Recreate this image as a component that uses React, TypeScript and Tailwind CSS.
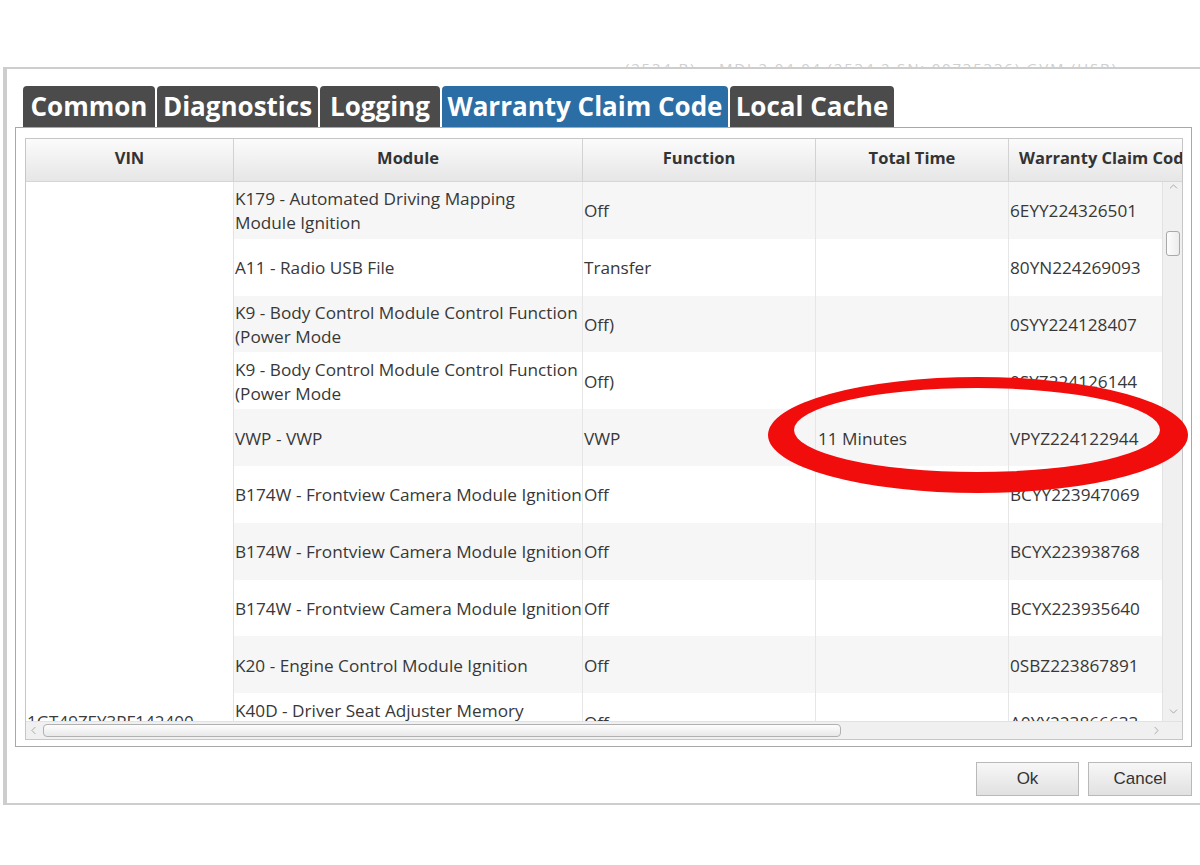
import { ChevronDown, ChevronLeft, ChevronRight, ChevronUp } from 'lucide-react'

const tabs = [
  { label: 'Common', w: 'w-[132px]', active: false },
  { label: 'Diagnostics', w: 'w-[161px]', active: false },
  { label: 'Logging', w: 'w-[120px]', active: false },
  { label: 'Warranty Claim Code', w: 'w-[286px]', active: true },
  { label: 'Local Cache', w: 'w-[164px]', active: false },
]

const rows = [
  { module: ['K179 - Automated Driving Mapping', 'Module Ignition'], fn: 'Off', time: '', code: '6EYY224326501' },
  { module: ['A11 - Radio USB File'], fn: 'Transfer', time: '', code: '80YN224269093' },
  { module: ['K9 - Body Control Module Control Function', '(Power Mode'], fn: 'Off)', time: '', code: '0SYY224128407' },
  { module: ['K9 - Body Control Module Control Function', '(Power Mode'], fn: 'Off)', time: '', code: '0SYZ224126144' },
  { module: ['VWP - VWP'], fn: 'VWP', time: '11 Minutes', code: 'VPYZ224122944' },
  { module: ['B174W - Frontview Camera Module Ignition'], fn: 'Off', time: '', code: 'BCYY223947069' },
  { module: ['B174W - Frontview Camera Module Ignition'], fn: 'Off', time: '', code: 'BCYX223938768' },
  { module: ['B174W - Frontview Camera Module Ignition'], fn: 'Off', time: '', code: 'BCYX223935640' },
  { module: ['K20 - Engine Control Module Ignition'], fn: 'Off', time: '', code: '0SBZ223867891' },
  { module: ['K40D - Driver Seat Adjuster Memory', 'Ignition'], fn: 'Off', time: '', code: 'A0YY223866633' },
]

const headers = [
  { label: 'VIN', w: 'w-[208px]', align: 'justify-center' },
  { label: 'Module', w: 'w-[349px]', align: 'justify-center' },
  { label: 'Function', w: 'w-[233px]', align: 'justify-center' },
  { label: 'Total Time', w: 'w-[193px]', align: 'justify-center' },
  { label: 'Warranty Claim Code', w: 'flex-1', align: 'justify-start pl-[10px]' },
]

export default function App() {
  return (
    <div className="w-[1200px] h-[865px] bg-white relative overflow-hidden font-['Open_Sans','Noto_Sans',sans-serif]">
      {/* faint text of the window behind, cut by the dialog edge */}
      <div className="h-[67px] flex items-end pl-[625px]">
        <div className="h-[6px] overflow-hidden">
          <div className="text-[15px] leading-[15px] text-[#d0d0d0] whitespace-nowrap tracking-[0.12em]">
            (2534 B)&nbsp;&nbsp;&nbsp; MDI 2 04.04 (2534 2 SN: 00735336) GVM (USB)
          </div>
        </div>
      </div>

      {/* dialog */}
      <div className="ml-[3px] w-[1197px] border-l-[4px] border-t-2 border-b-2 border-[#cdcdcd] pt-[17px] pb-[7px]">
        <div className="flex gap-[2px] pl-[16px] h-[41px]">
          {tabs.map(t => (
            <div
              key={t.label}
              className={`${t.w} h-[41px] rounded-t-[4px] flex items-center justify-center text-white text-[26px] font-bold whitespace-nowrap ${t.active ? 'bg-[#2b6da5]' : 'bg-[#4b4b4b]'}`}
            >
              {t.label}
            </div>
          ))}
        </div>

        {/* tab panel */}
        <div className="ml-[8px] w-[1177px] h-[620px] border border-[#a8a8a8] pt-[10px] pl-[9px] pr-[8px] pb-[7px]">
          <div className="w-[1158px] h-[602px] border border-[#c6c6c6] flex flex-col bg-white">
            {/* header */}
            <div className="h-[43px] flex bg-gradient-to-b from-[#fbfbfb] to-[#e6e6e6] border-b border-[#d6d6d6] overflow-hidden">
              {headers.map((h, i) => (
                <div
                  key={h.label}
                  className={`${h.w} shrink-0 h-full flex items-center ${h.align} pb-[3px] text-[16.5px] font-bold text-[#333] whitespace-nowrap overflow-hidden ${i < headers.length - 1 ? 'border-r border-[#d2d2d2]' : ''}`}
                >
                  {h.label}
                </div>
              ))}
            </div>

            {/* body */}
            <div className="h-[539px] flex overflow-hidden">
              <div className="w-[208px] shrink-0 border-r border-[#e2e2e2] flex flex-col">
                <div className="h-[511px] shrink-0" />
                <div className="h-[57px] shrink-0 flex items-center pl-[1px] text-[17px] text-[#3b3b3b] whitespace-nowrap">
                  1GT49ZEY3PF142400
                </div>
              </div>

              <div className="w-[928px] shrink-0 flex flex-col">
                {rows.map((r, i) => (
                  <div
                    key={i}
                    className={`h-[56.8px] shrink-0 flex text-[17.2px] leading-[24px] text-[#383838] ${i % 2 === 0 ? 'bg-[#f6f6f6]' : 'bg-white'}`}
                  >
                    <div className="w-[349px] shrink-0 flex flex-col justify-center pl-[1px] pt-[2px] border-r border-[#e6e6e6] whitespace-nowrap overflow-hidden">
                      {r.module.map(m => (
                        <span key={m}>{m}</span>
                      ))}
                    </div>
                    <div className="w-[233px] shrink-0 flex items-center pl-[1px] pt-[2px] border-r border-[#e6e6e6]">{r.fn}</div>
                    <div className="w-[193px] shrink-0 flex items-center pl-[2px] pt-[2px] border-r border-[#e6e6e6]">{r.time}</div>
                    <div className="flex-1 flex items-center pl-[1px] pt-[2px] whitespace-nowrap overflow-hidden">{r.code}</div>
                  </div>
                ))}
              </div>

              {/* vertical scrollbar */}
              <div className="w-[21px] shrink-0 bg-[#f0f0f0] border-l border-[#e2e2e2] flex flex-col items-center">
                <ChevronUp size={13} strokeWidth={1.5} className="text-[#9a9a9a] mt-[-2px]" />
                <div className="mt-[38px] w-[14px] h-[25px] rounded-[3px] border border-[#a9a9a9] bg-gradient-to-r from-[#fdfdfd] to-[#ececec]" />
                <div className="flex-1" />
                <ChevronDown size={13} strokeWidth={1.5} className="text-[#9a9a9a] mb-[3px]" />
              </div>
            </div>

            {/* horizontal scrollbar */}
            <div className="h-[18px] flex bg-[#f0f0f0] border-t border-[#e2e2e2]">
              <div className="w-[1137px] flex items-center">
                <ChevronLeft size={13} strokeWidth={1.5} className="text-[#9a9a9a] ml-[1px]" />
                <div className="ml-[3px] w-[798px] h-[13px] rounded-[4px] border border-[#b1b1b1] bg-gradient-to-b from-[#fdfdfd] to-[#e9e9e9]" />
                <div className="flex-1" />
                <ChevronRight size={13} strokeWidth={1.5} className="text-[#9a9a9a]" />
              </div>
              <div className="flex-1" />
            </div>
          </div>
        </div>

        {/* buttons */}
        <div className="flex justify-end gap-[9px] pr-[8px] mt-[15px]">
          <button className="w-[103px] h-[34px] border border-[#b9b9b9] bg-gradient-to-b from-[#f7f7f7] to-[#e1e1e1] text-[17px] text-[#333] font-['Liberation_Sans',Arial,sans-serif]">
            Ok
          </button>
          <button className="w-[104px] h-[34px] border border-[#b9b9b9] bg-gradient-to-b from-[#f7f7f7] to-[#e1e1e1] text-[17px] text-[#333] font-['Liberation_Sans',Arial,sans-serif]">
            Cancel
          </button>
        </div>
      </div>

      {/* red hand-drawn ellipse annotation */}
      <svg className="absolute left-0 top-0 pointer-events-none" width="1200" height="865" viewBox="0 0 1200 865">
        <path
          fillRule="evenodd"
          fill="#f20d0d"
          d="M768 435 A210 58 0 1 0 1188 435 A210 58 0 1 0 768 435 Z M794 430 A183 42 0 1 0 1160 430 A183 42 0 1 0 794 430 Z"
        />
      </svg>
    </div>
  )
}
